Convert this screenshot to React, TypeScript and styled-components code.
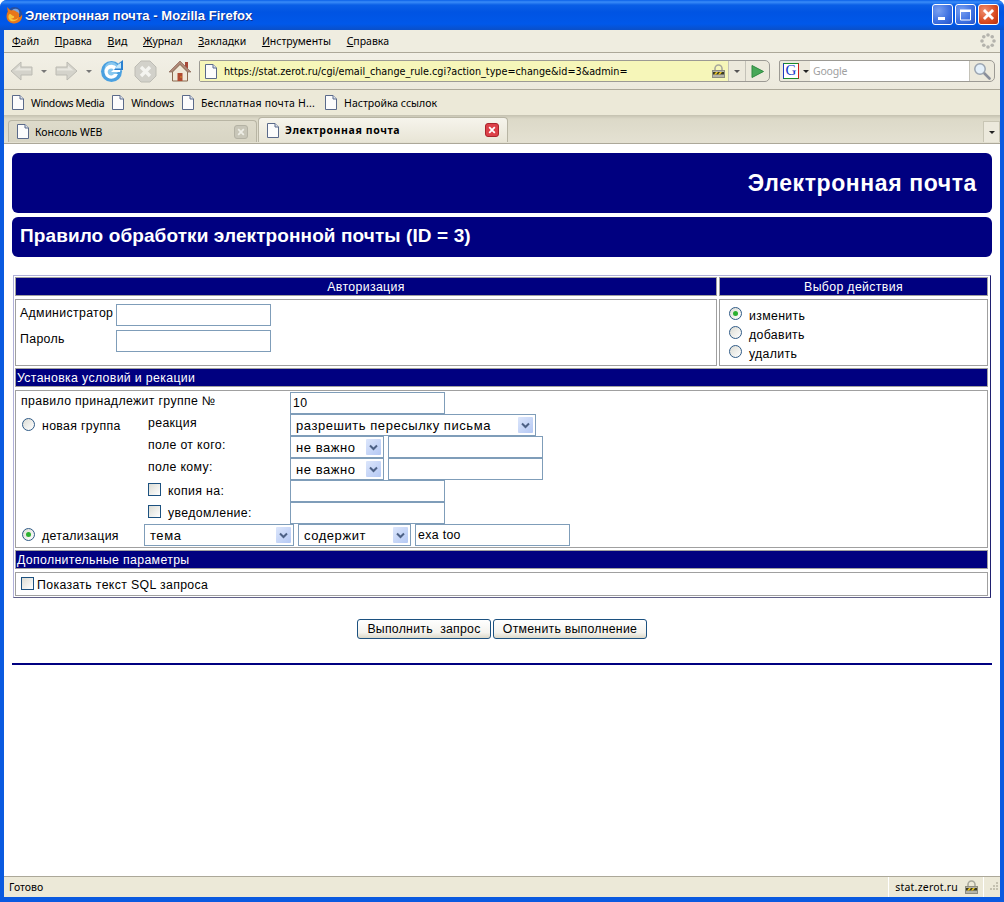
import React from "react";
import styled, { createGlobalStyle } from "styled-components";

const Global = createGlobalStyle`
  html, body { margin: 0; padding: 0; background: #fff; }
  * { box-sizing: border-box; }
`;

const chromeFont = `"Noto Sans", "DejaVu Sans", sans-serif`;
const pageFont = `"Liberation Sans", Arial, sans-serif`;

const Frame = styled.div`
  width: 1004px; height: 902px; display: flex; flex-direction: column;
  padding: 0 4px 5px 4px; overflow: hidden;
  background: linear-gradient(180deg, #0a5ae0 0, #0a5ae0 100%);
  border-radius: 7px 7px 0 0;
`;
const TitleBar = styled.div`
  height: 30px; margin: 0 -4px; padding: 0 5px 0 5px; flex: none;
  display: flex; align-items: center; gap: 2px;
  background: linear-gradient(180deg, #0a60e8 0, #3a8cf8 2px, #0a5fe6 5px, #0054e3 12px, #0058ea 24px, #0a4fc8 30px);
`;
const TitleText = styled.div`
  font: bold 13px "Liberation Sans", sans-serif; color: #fff; flex: 1;
  text-shadow: 1px 1px 0 #0f2f90; white-space: nowrap; letter-spacing: 0.05px;
`;
const WinButtons = styled.div`display: flex; gap: 2px; margin-right: 0; margin-top: -2px;`;
const WinBtn = styled.div<{ $close?: boolean }>`
  width: 21px; height: 21px; border: 1px solid #fff; border-radius: 3px;
  display: flex; align-items: center; justify-content: center;
  background: ${p => p.$close
    ? "radial-gradient(circle at 30% 30%, #f09070, #d84a20 60%, #b83010)"
    : "radial-gradient(circle at 30% 30%, #7aa0f0, #3c6fe0 60%, #2452c8)"};
`;
const Chrome = styled.div`
  flex: 1; display: flex; flex-direction: column; min-height: 0; background: #ece9d8;
  font-family: ${chromeFont}; color: #000;
`;
const MenuBar = styled.div`
  height: 23px; flex: none; display: flex; align-items: center; padding: 0 4px 0 8px;
  background: #efede0; border-bottom: 1px solid #aca899; font-size: 10.5px;
`;
const MenuItem = styled.span`margin-right: 15.7px; white-space: nowrap;`;
const Spacer = styled.div`flex: 1;`;
const NavBar = styled.div`
  height: 37px; flex: none; display: flex; align-items: center; padding: 0 5px 0 6px;
  background: linear-gradient(180deg, #f2f0e6, #ece9dc); border-bottom: 1px solid #aca899;
`;
const NavSlot = styled.div<{ $w: number }>`
  width: ${p => p.$w}px; flex: none; display: flex; align-items: center;
`;
const Caret = styled.span<{ $c?: string }>`
  display: inline-block; width: 0; height: 0; flex: none;
  border-left: 3px solid transparent; border-right: 3px solid transparent;
  border-top: 3px solid ${p => p.$c ?? "#777"};
`;
const UrlBar = styled.div`
  width: 571px; height: 22px; flex: none; display: flex; align-items: stretch;
  border: 1px solid #9c9a94; border-radius: 2px 5px 5px 2px; background: #ece9dc;
`;
const UrlField = styled.div`
  flex: 1; display: flex; align-items: center; background: #f6f6b9; padding: 0 3px 0 5px;
  font-size: 10.5px; white-space: nowrap; overflow: hidden;
`;
const UrlText = styled.span`margin-left: 7px; flex: 1; font-family: "DejaVu Sans", sans-serif; font-size: 9.66px;`;
const UrlBtn = styled.div<{ $w: number }>`
  width: ${p => p.$w}px; flex: none; border-left: 1px solid #c4c2b8;
  display: flex; align-items: center; justify-content: center;
`;
const SearchBar = styled.div`
  width: 216px; height: 22px; margin-left: 9px; flex: none; display: flex; align-items: stretch;
  border: 1px solid #9c9a94; border-radius: 2px 5px 5px 2px; background: #ece9dc;
`;
const EngineBtn = styled.div`
  width: 30px; flex: none; display: flex; align-items: center; gap: 4px; padding-left: 3px;
`;
const GBox = styled.div`
  width: 16px; height: 16px; border: 1px solid; border-color: #1a8a2a #d02020 #1a8a2a #1a3ac0;
  background: #fff; color: #1236c8; font: 15px/13px "Liberation Serif", serif; text-align: center;
`;
const SearchField = styled.div`
  flex: 1; background: #fff; color: #a0a0a0; font-size: 10.5px; padding-left: 3px; letter-spacing: -0.2px;
  display: flex; align-items: center;
`;
const BookBar = styled.div`
  height: 25px; flex: none; display: flex; align-items: center; padding: 0 0 0 8px;
  background: #ece9d8; font-size: 10.5px;
`;
const BookItem = styled.div<{ $mr: number; $ls: number }>`
  display: flex; align-items: center; gap: 7px; margin-right: ${p => p.$mr}px; white-space: nowrap;
  letter-spacing: ${p => p.$ls}px;
`;
const TabStrip = styled.div`
  height: 29px; flex: none; display: flex; align-items: flex-end; padding: 0 0 1px 4px;
  background: linear-gradient(180deg, #c4c1b0 0, #dcd9c8 4px, #e4e1d2 100%);
  border-bottom: 1px solid #aca899;
`;
const Tab = styled.div<{ $active?: boolean }>`
  width: ${p => (p.$active ? 250 : 249)}px; height: ${p => (p.$active ? 25 : 22)}px; flex: none;
  margin-right: 1px; display: flex; align-items: center; padding: 0 8px 0 8px; gap: 6px;
  font-size: 10.5px; font-weight: ${p => (p.$active ? 700 : 400)};
  letter-spacing: ${p => (p.$active ? 0.6 : 0)}px;
  border: 1px solid #b8b5a4; border-bottom: 0; border-radius: 4px 4px 0 0;
  background: ${p => p.$active ? "linear-gradient(180deg,#f6f4ec,#e8e5d6)" : "linear-gradient(180deg,#dedbcb,#d8d5c4)"};
`;
const TabLabel = styled.span`flex: 1; white-space: nowrap;`;
const TabClose = styled.div<{ $active?: boolean }>`
  width: 14px; height: 14px; border-radius: 3px; flex: none;
  display: flex; align-items: center; justify-content: center;
  background: ${p => (p.$active ? "#dc4048" : "#c8c6b8")};
  border: 1px solid ${p => (p.$active ? "#a8242c" : "#b4b2a4")};
`;
const TabList = styled.div`
  width: 17px; height: 21px; margin-left: auto; flex: none; display: flex; align-items: center;
  justify-content: center; border: 1px solid #c8c5b4; border-bottom: 0; background: #ece9dc;
`;
const Content = styled.div`
  flex: 1; min-height: 0; background: #fff; padding: 9px 8px 0 8px; font-family: ${pageFont};
  font-size: 12.3px; letter-spacing: 0.35px; color: #000;
`;
const Banner = styled.div`
  height: 60px; background: #000080; border-radius: 6px; display: flex; align-items: center;
  justify-content: flex-end; padding: 0 15px 0 0; margin-bottom: 4px; color: #fff;
  font-size: 23px; font-weight: 700; letter-spacing: 0.6px;
`;
const SubBanner = styled.div`
  height: 40px; background: #000080; border-radius: 6px; display: flex; align-items: center;
  padding: 0 0 2px 8px; color: #fff; font-size: 19px; font-weight: 700; letter-spacing: 0.1px;
`;
const FormTable = styled.div`
  width: 978px; margin: 18px 0 0 1px; border: 1px solid; border-color: #b0b0d8 #202070 #606088 #b0b0d8;
  padding: 1px 2px 1px 1px; display: grid; grid-template-columns: 702px 269px; gap: 2px 2px;
`;
const HeadCell = styled.div<{ $span?: boolean; $left?: boolean }>`
  height: 19px; background: #000080; color: #fff; border: 1px solid #a0a0a0;
  display: flex; align-items: center; justify-content: ${p => (p.$left ? "flex-start" : "center")};
  padding: 1px 0 0 ${p => (p.$left ? 1 : 0)}px; ${p => (p.$span ? "grid-column: 1 / -1;" : "")}
  white-space: nowrap;
`;
const Cell = styled.div<{ $span?: boolean; $h: number }>`
  height: ${p => p.$h}px; border: 1px solid #a0a0a0; background: #fff; margin-top: 1px;
  ${p => (p.$span ? "grid-column: 1 / -1;" : "")}
`;
const AuthGrid = styled.div`
  display: grid; grid-template-columns: 96px 155px; grid-auto-rows: 26px; padding: 2px 0 0 4px; align-items: center;
`;
const AuthLabel = styled.span`margin-top: -4px; white-space: nowrap;`;
const TextInput = styled.input<{ $w: number }>`
  width: ${p => p.$w}px; height: 22px; border: 1px solid #7f9db9; padding: 0 2px; margin: 0;
  background: #fff; font: inherit; letter-spacing: inherit; color: #000; outline: none; display: block;
`;
const ActionList = styled.div`
  display: flex; flex-direction: column; gap: 0; padding: 6px 0 0 9px;
`;
const ActionRow = styled.label`display: flex; align-items: center; gap: 7px; height: 19px;`;
const Radio = styled.span<{ $on?: boolean }>`
  width: 13px; height: 13px; border-radius: 50%; border: 1px solid #2f5a86; flex: none;
  margin-top: -4px; display: flex; align-items: center; justify-content: center;
  background: linear-gradient(135deg, #dcdcd4, #fff);
  &::after { content: ""; width: 5px; height: 5px; border-radius: 50%; background: ${p => (p.$on ? "#2cb030" : "transparent")}; }
`;
const Check = styled.span`
  width: 13px; height: 13px; border: 1px solid #1c5180; flex: none; display: inline-block; margin-top: -3px;
  background: linear-gradient(135deg, #dcdcd4, #fff);
`;
const RuleGrid = styled.div`
  display: grid; grid-template-columns: 128px 146px 1fr; grid-auto-rows: 22px; padding: 1px 0 0 0; align-items: center;
`;
const GroupLabel = styled.div`grid-column: 1 / 3; padding: 0 0 4px 5px; white-space: nowrap;`;
const RadioLabel = styled.label`display: flex; align-items: center; gap: 7px; padding: 2px 0 0 6px; white-space: nowrap;`;
const FieldLabel = styled.div`padding: 0 0 4px 4px; white-space: nowrap;`;
const CheckLabel = styled.label`display: flex; align-items: center; gap: 7px; padding: 0 0 0 4px; white-space: nowrap;`;
const Controls = styled.div`display: flex; gap: 4px; align-items: center;`;
const DetailControls = styled(Controls)`grid-column: 2 / 4;`;
const SelectBox = styled.div<{ $w: number }>`
  width: ${p => p.$w}px; height: 22px; border: 1px solid #7f9db9; background: #fff; flex: none;
  display: flex; align-items: center; justify-content: space-between; padding: 0 2px 0 5px; white-space: nowrap;
  font-size: 13px; letter-spacing: 0.55px;
`;
const SelectArrow = styled.span`
  width: 15px; height: 16px; background: linear-gradient(135deg, #dce6fb, #b4c8f4); flex: none;
  display: flex; align-items: center; justify-content: center; border-radius: 1px;
`;
const ExtraRow = styled.div`display: flex; align-items: center; gap: 3px; height: 100%; padding: 2px 0 0 5px;`;
const Buttons = styled.div`display: flex; justify-content: center; gap: 2px; margin: 21px 0 0 0;`;
const Button = styled.button<{ $w: number }>`
  width: ${p => p.$w}px; height: 20px; padding: 0; font: inherit; letter-spacing: 0.25px; color: #000; white-space: pre;
  border: 1px solid #1c5180; border-radius: 3px; background: linear-gradient(180deg, #fff, #f4f3ee 70%, #dcd8c8);
`;
const Rule = styled.div`height: 2px; background: #000080; margin-top: 24px;`;
const StatusBar = styled.div`
  height: 21px; flex: none; display: flex; align-items: center; padding: 0 0 0 5px; font-size: 10.5px;
  background: #ece9d8; border-top: 1px solid #aca899;
`;
const StatusHost = styled.div`
  height: 100%; display: flex; align-items: center; gap: 7px; border-left: 1px solid #fff; padding: 0 5px 0 6px; border-right: 1px solid #fff;
  letter-spacing: 0.2px;
`;
const Grip = styled.div`width: 16px; flex: none; display: flex; justify-content: flex-end; padding-right: 1px;`;

const FoxLogo = () => (
  <svg width="18" height="18" viewBox="0 0 18 18">
    <circle cx="9.500" cy="8.500" r="7.500" fill="#2a4f9a" />
    <circle cx="10.500" cy="6.500" r="3.800" fill="#7aa5e4" />
    <path d="M2.500 1c-.5 2 .2 3.500.3 4.500C.8 9 1 13.500 4.500 16c3.200 2.300 8 1.900 10.600-1 1.700-1.900 2.300-4.200 2-6.500-.8 1.700-2 2.600-3.200 2.600 1-2.600-.4-5.400-2.900-5.700-1.200-1-3.200-1.300-5-1C5 4 3.500 3 2.500 1z" fill="#e8761a" />
    <path d="M4.500 8c1.100 0 2.200.6 2.700 1.600 1.100.1 2 .6 2 1.500 0 1.300-1.800 1.800-3.400 1.200C7.500 14.300 11.200 14.300 13.500 11.500c-1 3.600-5.500 4.800-8.300 2.900C3 12.800 2.800 9.800 4.500 8z" fill="#f8c63c" />
  </svg>
);
const Arrow = ({ flip }: { flip?: boolean }) => (
  <svg width="23" height="22" viewBox="0 0 23 22" style={flip ? { transform: "scaleX(-1)" } : undefined}>
    <path d="M1 11 11 2v5h11v8H11v5z" fill="#d4d3cb" stroke="#bcbbb3" />
    <path d="M4 11 10 5.500V8.500h11v2H4z" fill="#e8e7e0" />
  </svg>
);
const Reload = () => (
  <svg width="24" height="24" viewBox="0 0 24 24">
    <circle cx="11.500" cy="12.500" r="10.500" fill="#4aa0e0" />
    <circle cx="11.500" cy="10" r="7" fill="#a8dcf8" opacity=".65" />
    <path d="M17 8.500A7 7 0 1 0 18 15h-4a3.500 3.500 0 1 1-.3-4.500L11 13h9l2-11-3 3z" fill="#fff" />
    <path d="M19 4 23 1v10h-9z" fill="#2a80d0" />
    <path d="M17.500 6 21 3.500v6h-6z" fill="#c4e8fb" />
  </svg>
);
const Stop = () => (
  <svg width="23" height="23" viewBox="0 0 23 23">
    <path d="M7 1h9l6 6v9l-6 6H7l-6-6V7z" fill="#d2d1ca" stroke="#bdbcb4" />
    <path d="m7 7 9 9m0-9-9 9" stroke="#f4f4f0" strokeWidth="3.400" />
  </svg>
);
const Home = () => (
  <svg width="24" height="24" viewBox="0 0 24 24">
    <path d="M17 3h3v7l-3-3z" fill="#a84838" />
    <path d="M12 2 1 13h3L12 5l8 8h3z" fill="#b08878" stroke="#8a6454" strokeWidth=".7" />
    <path d="M4.500 13 12 5.500l7.500 7.500v9h-15z" fill="#f0e8d8" stroke="#8a6a50" />
    <rect x="9.500" y="14" width="5" height="8" fill="#b04a30" />
    <rect x="12.500" y="17.500" width="1" height="1" fill="#f0d020" />
  </svg>
);
const Page = () => (
  <svg width="12" height="15" viewBox="0 0 12 15" style={{ flex: "none" }}>
    <path d="M.5.500h7.500l3.500 3.500v10.500H.5z" fill="#fcfcfc" stroke="#5a6a8a" />
    <path d="M8 .5V4h3.500" fill="#dfe4ee" stroke="#5a6a8a" />
  </svg>
);
const Lock = () => (
  <svg width="13" height="14" viewBox="0 0 13 14" style={{ flex: "none" }}>
    <path d="M3 7V4.500a3.500 3.500 0 0 1 7 0V7" fill="none" stroke="#a8a89c" strokeWidth="1.600" />
    <rect x=".5" y="6.500" width="12" height="7" fill="#b4b3a8" stroke="#8c8c80" />
    <path d="M1 8h11v2.500H1z" fill="#3a3a20" />
    <path d="m2 10.500 2-2.500h2l-2 2.500zm4 0L8 8h2l-2 2.500z" fill="#f0c820" />
  </svg>
);
const Go = () => (
  <svg width="13" height="13" viewBox="0 0 13 13"><path d="M1 .5 12.500 6.500 1 12.500z" fill="#48a858" stroke="#2f8a40" /></svg>
);
const Magnifier = () => (
  <svg width="18" height="18" viewBox="0 0 18 18">
    <path d="m10.500 10.500 6 6" stroke="#8a8f9a" strokeWidth="2.600" strokeLinecap="round" />
    <circle cx="7" cy="7" r="5.200" fill="#e4f0fa" stroke="#9aa4b0" strokeWidth="1.500" />
  </svg>
);
const Throbber = () => (
  <svg width="16" height="16" viewBox="0 0 16 16">
    {[[8, 2], [12.200, 3.800], [14, 8], [12.200, 12.200], [8, 14], [3.800, 12.200], [2, 8], [3.800, 3.800]].map(([x, y], i) => (
      <circle key={i} cx={x} cy={y} r="1.800" fill="#b4b3ac" />
    ))}
  </svg>
);
const Cross = ({ c, s }: { c: string; s: number }) => (
  <svg width={s} height={s} viewBox="0 0 10 10"><path d="m1.500 1.500 7 7m0-7-7 7" stroke={c} strokeWidth="2.200" /></svg>
);
const Chevron = () => (
  <svg width="9" height="7" viewBox="0 0 9 7"><path d="m1 1.500 3.500 3.500L8 1.500" fill="none" stroke="#4d6185" strokeWidth="2" /></svg>
);
const GripDots = () => (
  <svg width="10" height="10" viewBox="0 0 10 10" fill="#c4c1b0">
    <rect x="7" y="0" width="2" height="2" /><rect x="4" y="3" width="2" height="2" /><rect x="7" y="3" width="2" height="2" />
    <rect x="1" y="6" width="2" height="2" /><rect x="4" y="6" width="2" height="2" /><rect x="7" y="6" width="2" height="2" />
  </svg>
);

const Select = ({ w, children }: { w: number; children: React.ReactNode }) => (
  <SelectBox $w={w}>
    <span>{children}</span>
    <SelectArrow><Chevron /></SelectArrow>
  </SelectBox>
);

const menus = [["Ф", "айл"], ["П", "равка"], ["В", "ид"], ["Ж", "урнал"], ["З", "акладки"], ["И", "нструменты"], ["С", "правка"]];

export default function App() {
  return (
    <Frame>
      <Global />
      <TitleBar>
        <FoxLogo />
        <TitleText>Электронная почта - Mozilla Firefox</TitleText>
        <WinButtons>
          <WinBtn><svg width="13" height="13" viewBox="0 0 13 13"><rect x="2" y="9" width="7" height="3" fill="#fff" /></svg></WinBtn>
          <WinBtn><svg width="13" height="13" viewBox="0 0 13 13"><path d="M1.500 3h10v9h-10z" fill="none" stroke="#fff" /><rect x="1" y="1.500" width="11" height="2.500" fill="#fff" /></svg></WinBtn>
          <WinBtn $close><Cross c="#fff" s={13} /></WinBtn>
        </WinButtons>
      </TitleBar>
      <Chrome>
        <MenuBar>
          {menus.map(([a, b]) => <MenuItem key={a + b}><u>{a}</u>{b}</MenuItem>)}
          <Spacer />
          <Throbber />
        </MenuBar>
        <NavBar>
          <NavSlot $w={31}><Arrow /></NavSlot>
          <NavSlot $w={14}><Caret /></NavSlot>
          <NavSlot $w={31}><Arrow flip /></NavSlot>
          <NavSlot $w={14}><Caret /></NavSlot>
          <NavSlot $w={34}><Reload /></NavSlot>
          <NavSlot $w={34}><Stop /></NavSlot>
          <NavSlot $w={31}><Home /></NavSlot>
          <UrlBar>
            <UrlField>
              <Page />
              <UrlText>https://stat.zerot.ru/cgi/email_change_rule.cgi?action_type=change&amp;id=3&amp;admin=</UrlText>
              <Lock />
            </UrlField>
            <UrlBtn $w={17}><Caret $c="#555" /></UrlBtn>
            <UrlBtn $w={24}><Go /></UrlBtn>
          </UrlBar>
          <SearchBar>
            <EngineBtn><GBox>G</GBox><Caret $c="#222" /></EngineBtn>
            <SearchField>Google</SearchField>
            <UrlBtn $w={25}><Magnifier /></UrlBtn>
          </SearchBar>
        </NavBar>
        <BookBar>
          <BookItem $mr={8} $ls={-0.38}><Page />Windows Media</BookItem>
          <BookItem $mr={8} $ls={-0.3}><Page />Windows</BookItem>
          <BookItem $mr={10} $ls={0.2}><Page />Бесплатная почта Н...</BookItem>
          <BookItem $mr={0} $ls={0}><Page />Настройка ссылок</BookItem>
        </BookBar>
        <TabStrip>
          <Tab><Page /><TabLabel>Консоль WEB</TabLabel><TabClose><Cross c="#eeeee6" s={8} /></TabClose></Tab>
          <Tab $active><Page /><TabLabel>Электронная почта</TabLabel><TabClose $active><Cross c="#fff" s={8} /></TabClose></Tab>
          <TabList><Caret $c="#222" /></TabList>
        </TabStrip>
        <Content>
          <Banner>Электронная почта</Banner>
          <SubBanner>Правило обработки электронной почты (ID = 3)</SubBanner>
          <FormTable>
            <HeadCell>Авторизация</HeadCell>
            <HeadCell>Выбор действия</HeadCell>
            <Cell $h={67}>
              <AuthGrid>
                <AuthLabel>Администратор</AuthLabel><TextInput $w={155} />
                <AuthLabel>Пароль</AuthLabel><TextInput $w={155} />
              </AuthGrid>
            </Cell>
            <Cell $h={67}>
              <ActionList>
                <ActionRow><Radio $on />изменить</ActionRow>
                <ActionRow><Radio />добавить</ActionRow>
                <ActionRow><Radio />удалить</ActionRow>
              </ActionList>
            </Cell>
            <HeadCell $span $left>Установка условий и рекации</HeadCell>
            <Cell $span $h={158}>
              <RuleGrid>
                <GroupLabel>правило принадлежит группе №</GroupLabel>
                <TextInput $w={155} defaultValue="10" />
                <RadioLabel><Radio />новая группа</RadioLabel>
                <FieldLabel>реакция</FieldLabel>
                <Select w={246}>разрешить пересылку письма</Select>
                <span />
                <FieldLabel>поле от кого:</FieldLabel>
                <Controls><Select w={94}>не важно</Select><TextInput $w={155} /></Controls>
                <span />
                <FieldLabel>поле кому:</FieldLabel>
                <Controls><Select w={94}>не важно</Select><TextInput $w={155} /></Controls>
                <span />
                <CheckLabel><Check />копия на:</CheckLabel>
                <TextInput $w={155} />
                <span />
                <CheckLabel><Check />уведомление:</CheckLabel>
                <TextInput $w={155} />
                <RadioLabel><Radio $on />детализация</RadioLabel>
                <DetailControls>
                  <Select w={150}>тема</Select>
                  <Select w={113}>содержит</Select>
                  <TextInput $w={155} defaultValue="exa too" />
                </DetailControls>
              </RuleGrid>
            </Cell>
            <HeadCell $span $left>Дополнительные параметры</HeadCell>
            <Cell $span $h={24}>
              <ExtraRow><Check />Показать текст SQL запроса</ExtraRow>
            </Cell>
          </FormTable>
          <Buttons>
            <Button $w={134}>{"Выполнить  запрос"}</Button>
            <Button $w={154}>Отменить выполнение</Button>
          </Buttons>
          <Rule />
        </Content>
        <StatusBar>
          Готово
          <Spacer />
          <StatusHost>stat.zerot.ru<Lock /></StatusHost>
          <Grip><GripDots /></Grip>
        </StatusBar>
      </Chrome>
    </Frame>
  );
}
